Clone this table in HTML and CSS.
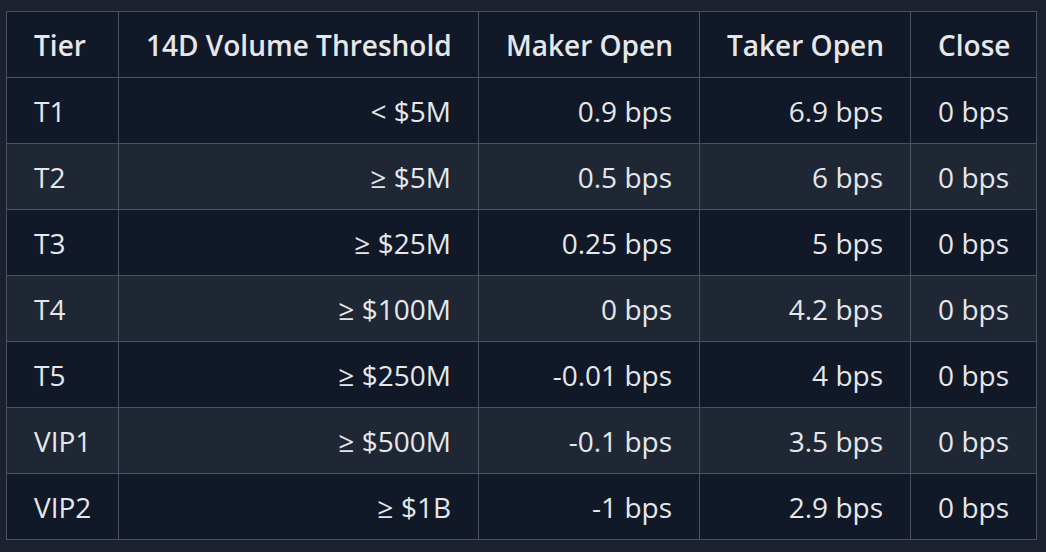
FILE: index.html
```html
<!DOCTYPE html>
<html lang="en">
<head>
<meta charset="utf-8">
<title>Fee tiers</title>
<link rel="stylesheet" href="styles.css">
</head>
<body>
<div class="wrap">
<table class="fees">
<colgroup>
<col class="c1"><col class="c2"><col class="c3"><col class="c4"><col class="c5">
</colgroup>
<thead>
<tr><th class="left">Tier</th><th>14D Volume Threshold</th><th>Maker Open</th><th>Taker Open</th><th>Close</th></tr>
</thead>
<tbody>
<tr><td class="left">T1</td><td>&lt; $5M</td><td>0.9 bps</td><td>6.9 bps</td><td>0 bps</td></tr>
<tr><td class="left">T2</td><td>≥ $5M</td><td>0.5 bps</td><td>6 bps</td><td>0 bps</td></tr>
<tr><td class="left">T3</td><td>≥ $25M</td><td>0.25 bps</td><td>5 bps</td><td>0 bps</td></tr>
<tr><td class="left">T4</td><td>≥ $100M</td><td>0 bps</td><td>4.2 bps</td><td>0 bps</td></tr>
<tr><td class="left">T5</td><td>≥ $250M</td><td>-0.01 bps</td><td>4 bps</td><td>0 bps</td></tr>
<tr><td class="left">VIP1</td><td>≥ $500M</td><td>-0.1 bps</td><td>3.5 bps</td><td>0 bps</td></tr>
<tr><td class="left">VIP2</td><td>≥ $1B</td><td>-1 bps</td><td>2.9 bps</td><td>0 bps</td></tr>
</tbody>
</table>
</div>
</body>
</html>
```
FILE: styles.css
```css
html, body {
  margin: 0;
  padding: 0;
  background: #1c2130;
}
body {
  font-family: "Open Sans", "Noto Sans", sans-serif;
  color: #e5e7eb;
}
.wrap {
  padding: 11px 10px 0 6px;
}
.fees {
  width: 1030px;
  border-collapse: collapse;
  table-layout: fixed;
  font-size: 28px;
}
.c1 { width: 112px; }
.c2 { width: 360px; }
.c3 { width: 221px; }
.c4 { width: 211px; }
.c5 { width: 126px; }
.fees th, .fees td {
  border: 1px solid #4b5160;
  height: 66px;
  padding: 0 27px;
  text-align: right;
  font-weight: 400;
  white-space: nowrap;
  box-sizing: border-box;
}
.fees th { font-weight: 600; }
.fees .left { text-align: left; }
.fees thead tr,
.fees tbody tr:nth-child(odd) { background: #111827; }
.fees tbody tr:nth-child(even) { background: #1f2735; }
```
